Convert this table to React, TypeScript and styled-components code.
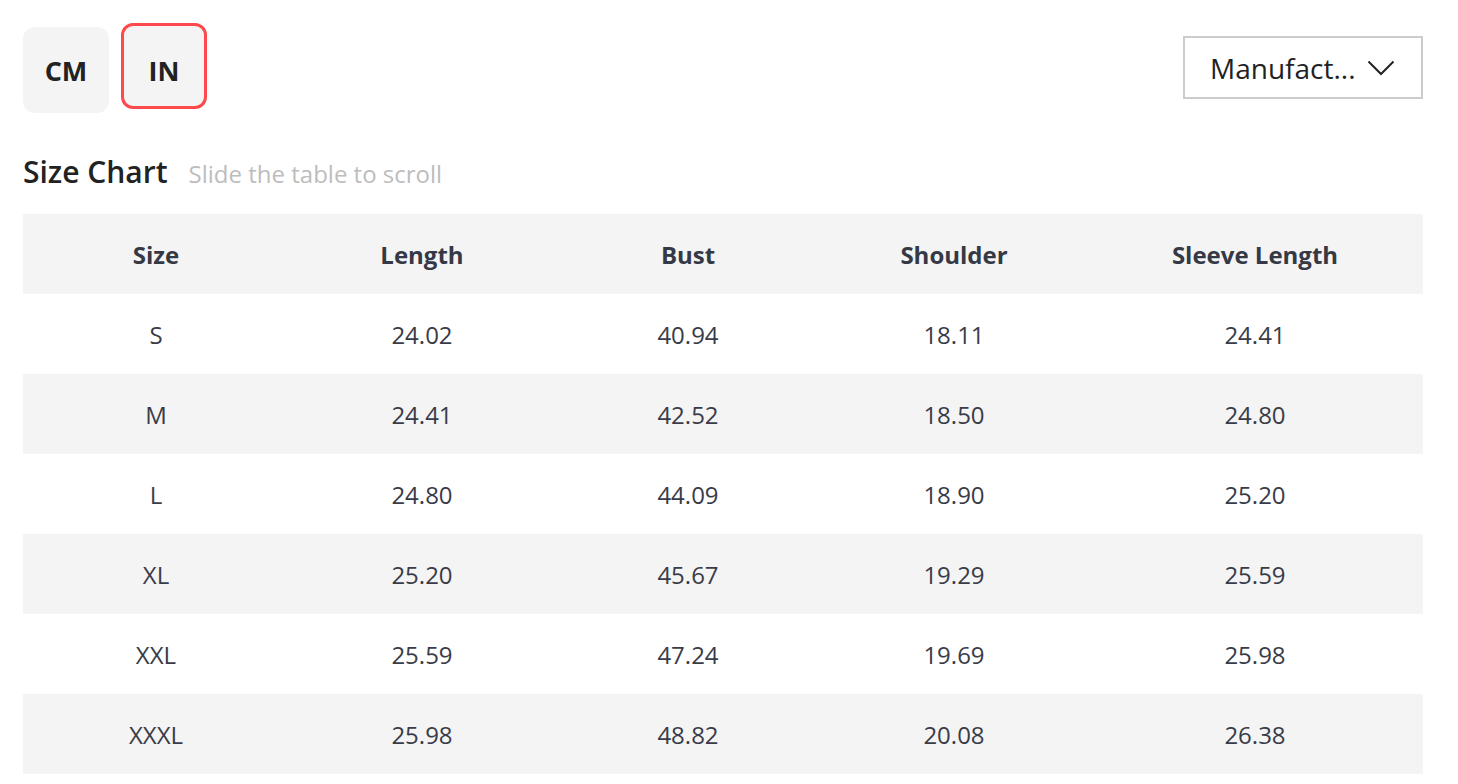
import React from "react";
import styled, { createGlobalStyle } from "styled-components";

const GlobalStyle = createGlobalStyle`
  html, body { margin: 0; padding: 0; background: #fff; }
  body { font-family: "Open Sans", "Noto Sans", sans-serif; }
`;

const Page = styled.div`
  padding: 23px 35px 0 23px;
  width: 1400px;
`;

const TopBar = styled.div`
  display: flex;
  justify-content: space-between;
  align-items: flex-start;
`;

const UnitGroup = styled.div`
  display: flex;
  gap: 12px;
  align-items: flex-start;
`;

const UnitButton = styled.button<{ $active?: boolean }>`
  box-sizing: border-box;
  width: 86px;
  height: 86px;
  margin-top: ${(p) => (p.$active ? "0" : "4px")};
  padding: ${(p) => (p.$active ? "9px 0 0" : "0")};
  display: flex;
  align-items: center;
  justify-content: center;
  border-radius: 12px;
  border: ${(p) => (p.$active ? "3px solid #ff4a4d" : "none")};
  background: #f4f4f4;
  font-family: "Open Sans", sans-serif;
  font-weight: 700;
  font-size: 27px;
  color: #222;
  cursor: pointer;
`;

const Select = styled.div`
  box-sizing: border-box;
  margin-top: 13px;
  width: 240px;
  height: 63px;
  border: 2px solid #cccccc;
  display: flex;
  align-items: center;
  justify-content: space-between;
  padding: 0 26px 0 25px;
  font-size: 28px;
  color: #222;
`;

const TitleRow = styled.div`
  display: flex;
  align-items: baseline;
  gap: 21px;
  margin-top: 39px;
  margin-bottom: 20px;
  line-height: 40px;
`;

const Title = styled.h2`
  margin: 0;
  font-size: 30px;
  font-weight: 600;
  color: #222;
`;

const Hint = styled.span`
  font-size: 24px;
  color: #bdbdbd;
`;

const Table = styled.table`
  width: 1400px;
  border-collapse: collapse;
  table-layout: fixed;
`;

const HeadCell = styled.th<{ $w: number }>`
  width: ${(p) => p.$w}px;
  height: 80px;
  padding: 0;
  background: #f4f4f4;
  font-size: 24px;
  font-weight: 700;
  color: #353946;
  text-align: center;
`;

const Row = styled.tr<{ $alt: boolean }>`
  background: ${(p) => (p.$alt ? "#f4f4f4" : "#ffffff")};
`;

const Cell = styled.td`
  height: 80px;
  padding: 0;
  font-size: 24px;
  color: #393c48;
  text-align: center;
`;

const headers = ["Size", "Length", "Bust", "Shoulder", "Sleeve Length"];
const widths = [266, 266, 266, 266, 336];
const rows = [
  ["S", "24.02", "40.94", "18.11", "24.41"],
  ["M", "24.41", "42.52", "18.50", "24.80"],
  ["L", "24.80", "44.09", "18.90", "25.20"],
  ["XL", "25.20", "45.67", "19.29", "25.59"],
  ["XXL", "25.59", "47.24", "19.69", "25.98"],
  ["XXXL", "25.98", "48.82", "20.08", "26.38"],
];

export default function App() {
  return (
    <>
      <GlobalStyle />
      <Page>
        <TopBar>
          <UnitGroup>
            <UnitButton>CM</UnitButton>
            <UnitButton $active>IN</UnitButton>
          </UnitGroup>
          <Select>
            <span>Manufact...</span>
            <svg width="28" height="16" viewBox="0 0 28 16" fill="none">
              <path d="M1.5 1.5 L14 14 L26.5 1.5" stroke="#222" strokeWidth="2" />
            </svg>
          </Select>
        </TopBar>
        <TitleRow>
          <Title>Size Chart</Title>
          <Hint>Slide the table to scroll</Hint>
        </TitleRow>
        <Table>
          <thead>
            <tr>
              {headers.map((h, i) => (
                <HeadCell key={h} $w={widths[i]}>
                  {h}
                </HeadCell>
              ))}
            </tr>
          </thead>
          <tbody>
            {rows.map((r, i) => (
              <Row key={r[0]} $alt={i % 2 === 1}>
                {r.map((c, j) => (
                  <Cell key={j}>{c}</Cell>
                ))}
              </Row>
            ))}
          </tbody>
        </Table>
      </Page>
    </>
  );
}
